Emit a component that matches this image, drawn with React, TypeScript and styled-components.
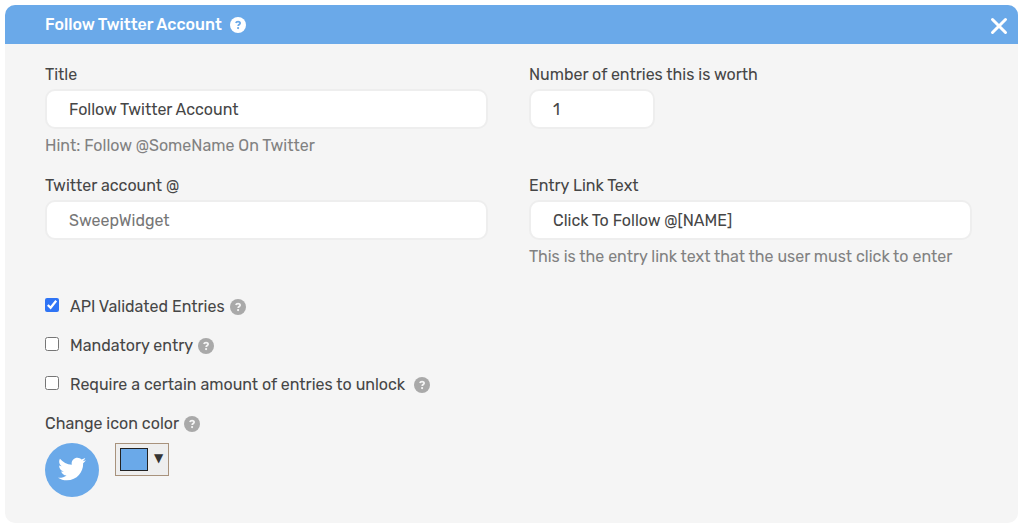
import React, { useId, useState } from "react";
import styled, { createGlobalStyle } from "styled-components";
import { FaTwitter } from "react-icons/fa";

const blue = "#6aa9e9";
const ink = "#464646";

const GlobalStyle = createGlobalStyle`
  *, *::before, *::after { box-sizing: border-box; }
  body {
    margin: 0;
    background: #fff;
    color: ${ink};
    font: 400 16px/22px Rubik, Roboto, "Liberation Sans", sans-serif;
  }
  button, input { font: inherit; color: inherit; }
`;

const Page = styled.main`
  padding: 5px 6px 6px 5px;
`;

const Panel = styled.section`
  border-radius: 10px;
  overflow: hidden;
  background: #f5f5f5;
`;

const PanelHeader = styled.header`
  display: flex;
  align-items: center;
  gap: 8px;
  height: 39px;
  padding: 0 9px 0 40px;
  background: ${blue};
  color: #fff;
`;

const PanelTitle = styled.h2`
  margin: 0;
  font-size: 16px;
  line-height: 22px;
  font-weight: 500;
`;

const IconButton = styled.button<{ $color: string; $size: number }>`
  display: flex;
  flex: none;
  padding: 0;
  border: 0;
  background: none;
  color: ${(p) => p.$color};
  cursor: pointer;

  svg {
    display: block;
    width: ${(p) => p.$size}px;
    height: ${(p) => p.$size}px;
  }
`;

const CloseSlot = styled.div`
  margin-left: auto;
`;

const PanelBody = styled.form`
  padding: 20px 46px 26px 40px;
`;

const FieldGrid = styled.div`
  display: grid;
  grid-template-columns: 1fr 1fr;
  gap: 18px 41px;
`;

const FieldBox = styled.div`
  display: flex;
  flex-direction: column;
  align-items: flex-start;
`;

const FieldLabel = styled.label`
  margin-bottom: 3px;
`;

const TextInput = styled.input<{ $short?: boolean }>`
  width: ${(p) => (p.$short ? "126px" : "100%")};
  height: 40px;
  padding: 0 22px;
  border: 2px solid #eeeeee;
  border-radius: 10px;
  background: #fff;
  outline: none;

  &::placeholder {
    color: #777;
    opacity: 1;
  }
`;

const Hint = styled.p`
  margin: 6px 0 0;
  color: #818181;
`;

const OptionList = styled.div`
  display: flex;
  flex-direction: column;
  gap: 17px;
  margin: 28px 0 17px;
`;

const OptionRow = styled.div`
  display: flex;
  align-items: center;
`;

const Checkbox = styled.input`
  align-self: flex-start;
  flex: none;
  width: 14px;
  height: 14px;
  margin: 2px 11px 0 0;
  accent-color: #2f74f5;
`;

const OptionLabel = styled.label<{ $gap: number }>`
  margin-right: ${(p) => p.$gap}px;
`;

const ColorHeading = styled.div`
  display: flex;
  align-items: center;
  gap: 5px;
  margin-bottom: 8px;
`;

const ColorRow = styled.div`
  display: flex;
  align-items: flex-start;
  gap: 16px;
`;

const TwitterBadge = styled.div`
  display: flex;
  align-items: center;
  justify-content: center;
  width: 54px;
  height: 54px;
  padding-bottom: 2px;
  border-radius: 50%;
  background: ${blue};
  color: #fff;
`;

const ColorPicker = styled.button`
  display: flex;
  align-items: flex-start;
  gap: 5px;
  height: 33px;
  padding: 4px;
  border: 1px solid #a8927c;
  background: #eee;
  color: #333;
  cursor: pointer;
`;

const Swatch = styled.span`
  width: 28px;
  height: 23px;
  border: 1px solid #222;
  background: ${blue};
`;

const Arrow = styled.span`
  width: 11px;
  font: 12px/20px "DejaVu Sans", sans-serif;
`;

function Help({ topic, light }: { topic: string; light?: boolean }) {
  const mark = light ? blue : "#f5f5f5";
  return (
    <IconButton
      type="button"
      aria-label={`Help: ${topic}`}
      $color={light ? "#fff" : "#a9a9a9"}
      $size={16}
    >
      <svg viewBox="0 0 16 16" aria-hidden="true">
        <circle cx="8" cy="8" r="8" fill="currentColor" />
        <path
          d="M5.9 5.9C6.2 4.9 7 4.6 8 4.6c1.200 0 2.100.6 2.100 1.600 0 1.300-1.900 1.300-1.900 2.700"
          fill="none"
          stroke={mark}
          strokeWidth="1.800"
        />
        <circle cx="8.100" cy="11.100" r="1.100" fill={mark} />
      </svg>
    </IconButton>
  );
}

type FieldProps = {
  label: string;
  initial?: string;
  placeholder?: string;
  hint?: string;
  short?: boolean;
};

function Field({ label, initial = "", placeholder, hint, short }: FieldProps) {
  const id = useId();
  const [value, setValue] = useState(initial);
  return (
    <FieldBox>
      <FieldLabel htmlFor={id}>{label}</FieldLabel>
      <TextInput
        id={id}
        type="text"
        $short={short}
        value={value}
        placeholder={placeholder}
        onChange={(e) => setValue(e.target.value)}
      />
      {hint && <Hint>{hint}</Hint>}
    </FieldBox>
  );
}

function Option({ label, checked, gap = 5 }: { label: string; checked?: boolean; gap?: number }) {
  const id = useId();
  return (
    <OptionRow>
      <Checkbox id={id} type="checkbox" defaultChecked={checked} />
      <OptionLabel htmlFor={id} $gap={gap}>
        {label}
      </OptionLabel>
      <Help topic={label} />
    </OptionRow>
  );
}

export default function App() {
  return (
    <>
      <GlobalStyle />
      <Page>
        <Panel>
          <PanelHeader>
            <PanelTitle>Follow Twitter Account</PanelTitle>
            <Help topic="Follow Twitter Account" light />
            <CloseSlot>
              <IconButton type="button" aria-label="Close" $color="#fff" $size={20}>
                <svg viewBox="0 0 20 20" fill="none" stroke="currentColor" strokeWidth="3" strokeLinecap="round">
                  <path d="M3.5 4.5 16.5 17.5M16.5 4.5 3.5 17.5" />
                </svg>
              </IconButton>
            </CloseSlot>
          </PanelHeader>
          <PanelBody onSubmit={(e) => e.preventDefault()}>
            <FieldGrid>
              <Field label="Title" initial="Follow Twitter Account" hint="Hint: Follow @SomeName On Twitter" />
              <Field label="Number of entries this is worth" initial="1" short />
              <Field label="Twitter account @" placeholder="SweepWidget" />
              <Field
                label="Entry Link Text"
                initial="Click To Follow @[NAME]"
                hint="This is the entry link text that the user must click to enter"
              />
            </FieldGrid>
            <OptionList>
              <Option label="API Validated Entries" checked />
              <Option label="Mandatory entry" />
              <Option label="Require a certain amount of entries to unlock" gap={9} />
            </OptionList>
            <ColorHeading>
              <span>Change icon color</span>
              <Help topic="Change icon color" />
            </ColorHeading>
            <ColorRow>
              <TwitterBadge>
                <FaTwitter size={28} />
              </TwitterBadge>
              <ColorPicker type="button" aria-label="Change icon color">
                <Swatch />
                <Arrow>▼</Arrow>
              </ColorPicker>
            </ColorRow>
          </PanelBody>
        </Panel>
      </Page>
    </>
  );
}
